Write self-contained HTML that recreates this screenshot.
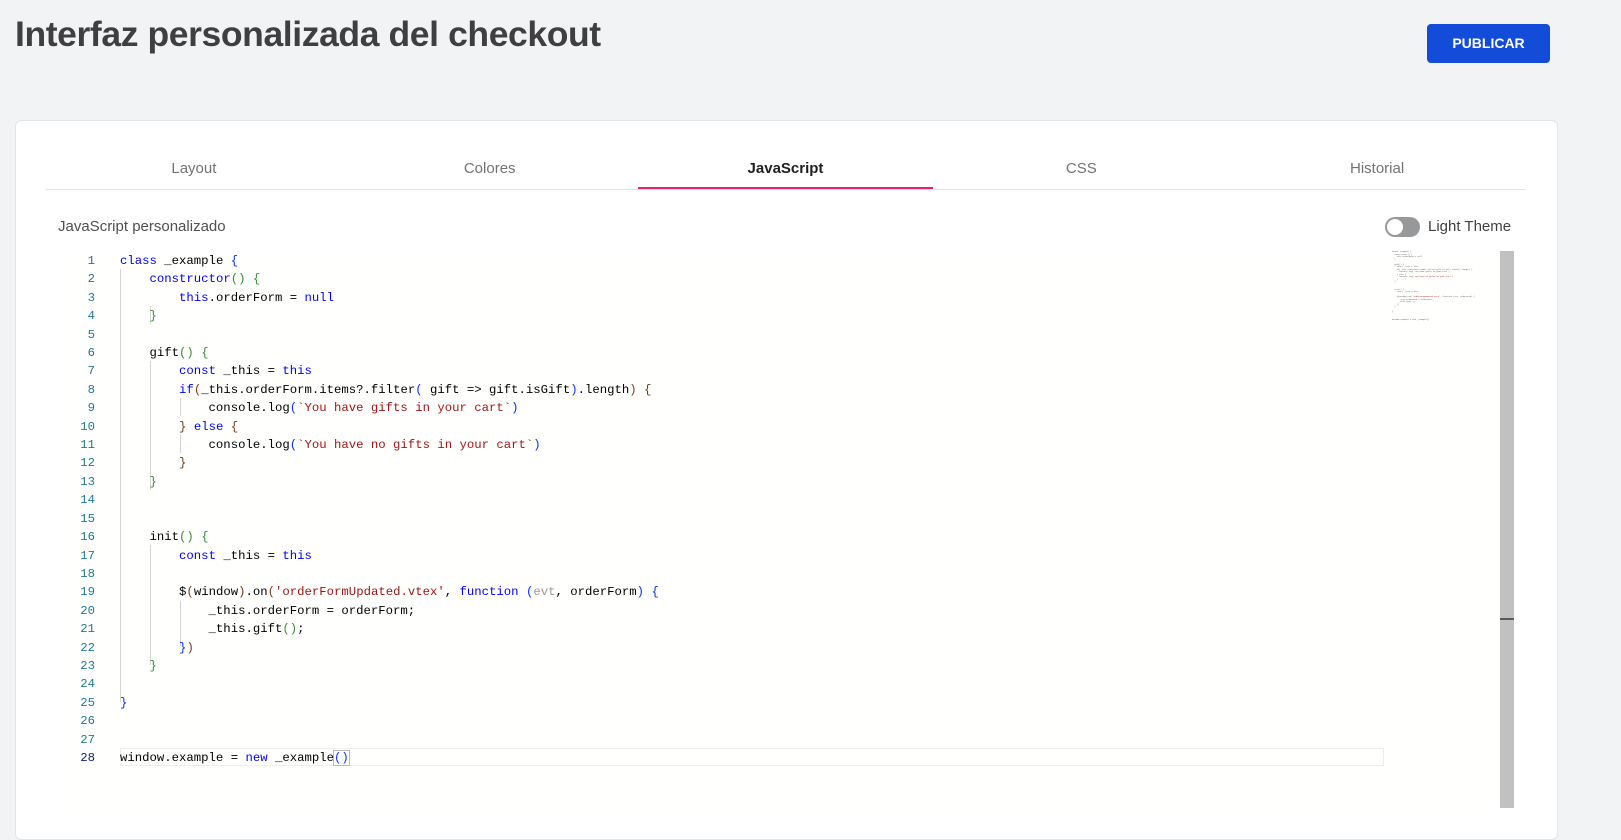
<!DOCTYPE html>
<html><head><meta charset="utf-8"><style>
*{box-sizing:border-box;margin:0;padding:0}
body{width:1621px;height:808px;background:#f2f3f5;font-family:"Liberation Sans",sans-serif;position:relative;overflow:hidden}
h1{position:absolute;left:15px;top:14px;font-size:35.5px;font-weight:bold;color:#3f3f40;letter-spacing:-0.4px}
.btn{position:absolute;left:1427px;top:24px;width:123px;height:39px;background:#134cd8;border-radius:4px;color:#fff;font-weight:bold;font-size:14px;text-align:center;line-height:39px}
.card{position:absolute;left:15px;top:120px;width:1543px;height:720px;background:#fff;border:1px solid #e3e4e6;border-radius:6px}
.tabs{position:absolute;left:46px;top:150px;width:1479px;height:40px;border-bottom:1px solid #e3e4e6;display:flex}
.tab{flex:1;text-align:center;font-size:15px;color:#727273;line-height:38px}
.tab.a{color:#1f1f1f;font-weight:bold;border-bottom:2px solid #f71963}
.lbl{position:absolute;left:58px;top:218px;font-size:15px;color:#4f4f4f}
.tg{position:absolute;left:1385px;top:217px;width:35px;height:20px;border-radius:10px;background:#979899}
.tg:after{content:"";position:absolute;left:2px;top:2px;width:16px;height:16px;border-radius:50%;background:#fff}
.lt{position:absolute;left:1428px;top:218px;font-size:15px;color:#3f3f40}
.ed{position:absolute;left:58px;top:251px;width:1456px;height:557px;background:#fffffe}
.sb{position:absolute;left:1500px;top:251px;width:14px;height:557px;background:#c1c1c1}
.ln,.cl{position:absolute;top:1px;font-family:"Liberation Mono",monospace;font-size:12.3px;line-height:18.4px;white-space:pre;color:#000}
.ln{left:0;width:37px;text-align:right;color:#237893}
.cl{left:62px}
.k{color:#0000ff}.s{color:#a31515}.b1{color:#0431fa}.b2{color:#319331}.b3{color:#7b3814}.g{color:#9a9a9a}
.cur{position:absolute;left:62px;top:497px;width:1264px;height:18px;border:1px solid #eee}
.gd{position:absolute;width:1px;background:#d3d3d3}
.mm{position:absolute;left:1334px;top:0;width:75px;height:60px;font-size:2px;line-height:2.5px;font-family:monospace;white-space:pre;color:#555}
</style></head><body>
<h1>Interfaz personalizada del checkout</h1>
<div class="btn">PUBLICAR</div>
<div class="card"></div>
<div class="tabs"><div class="tab">Layout</div><div class="tab">Colores</div><div class="tab a">JavaScript</div><div class="tab">CSS</div><div class="tab">Historial</div></div>
<div class="lbl">JavaScript personalizado</div>
<div class="tg"></div><div class="lt">Light Theme</div>
<div class="ed">
<div class="cur"></div>
<div class="gd" style="left:62px;top:18px;height:433px"></div>
<div class="gd" style="left:92px;top:55px;height:18px"></div>
<div class="gd" style="left:92px;top:110px;height:129px"></div>
<div class="gd" style="left:122px;top:147px;height:18px"></div>
<div class="gd" style="left:122px;top:184px;height:18px"></div>
<div class="gd" style="left:92px;top:294px;height:120px"></div>
<div class="gd" style="left:122px;top:350px;height:45px"></div>
<div class="ln">1
2
3
4
5
6
7
8
9
10
11
12
13
14
15
16
17
18
19
20
21
22
23
24
25
26
27
<span style="color:#0b216f">28</span></div>
<div class="cl"><span class="k">class</span> _example <span class="b1">{</span>
    <span class="k">constructor</span><span class="b2">()</span> <span class="b2">{</span>
        <span class="k">this</span>.orderForm = <span class="k">null</span>
    <span class="b2">}</span>

    gift<span class="b2">()</span> <span class="b2">{</span>
        <span class="k">const</span> _this = <span class="k">this</span>
        <span class="k">if</span><span class="b3">(</span>_this.orderForm.items?.filter<span class="b1">(</span> gift =&gt; gift.isGift<span class="b1">)</span>.length<span class="b3">)</span> <span class="b3">{</span>
            console.log<span class="b1">(</span><span class="s">`You have gifts in your cart`</span><span class="b1">)</span>
        <span class="b3">}</span> <span class="k">else</span> <span class="b3">{</span>
            console.log<span class="b1">(</span><span class="s">`You have no gifts in your cart`</span><span class="b1">)</span>
        <span class="b3">}</span>
    <span class="b2">}</span>


    init<span class="b2">()</span> <span class="b2">{</span>
        <span class="k">const</span> _this = <span class="k">this</span>

        $<span class="b3">(</span>window<span class="b3">)</span>.on<span class="b3">(</span><span class="s">'orderFormUpdated.vtex'</span>, <span class="k">function</span> <span class="b1">(</span><span class="g">evt</span>, orderForm<span class="b1">)</span> <span class="b1">{</span>
            _this.orderForm = orderForm;
            _this.gift<span class="b2">()</span>;
        <span class="b1">}</span><span class="b3">)</span>
    <span class="b2">}</span>

<span class="b1">}</span>


window.example = <span class="k">new</span> _example<span class="b1" style="outline:1px solid #b9b9b9">()</span></div>
<div class="mm"><span style="color:#00f">class</span> _example {
  constructor() {
    this.orderForm = null
  }

  gift() {
    const _this = this
    if(_this.orderForm.items?.filter(gift =&gt; gift.isGift).length) {
      console.log(<span style="color:#a31515">`You have gifts in your cart`</span>)
    } else {
      console.log(<span style="color:#a31515">`You have no gifts in your cart`</span>)
    }
  }


  init() {
    const _this = this

    $(window).on(<span style="color:#a31515">'orderFormUpdated.vtex'</span>, function (evt, orderForm) {
      _this.orderForm = orderForm;
      _this.gift();
    })
  }

}


window.example = new _example()</div>
</div>
<div class="sb"></div>
<div style="position:absolute;left:1500px;top:618px;width:14px;height:2px;background:#5a5a5a"></div>
</body></html>
